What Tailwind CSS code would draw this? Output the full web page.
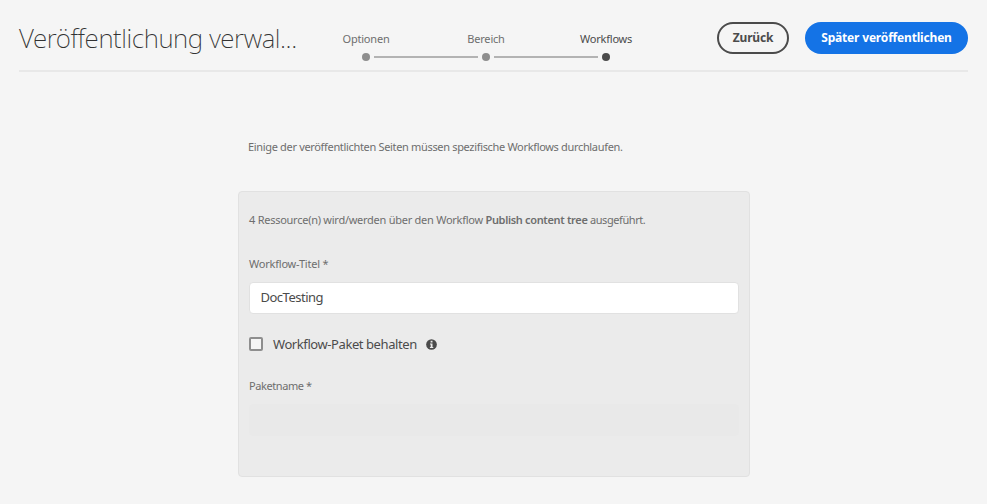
<!DOCTYPE html>
<html lang="de">
<head>
<meta charset="utf-8">
<title>Veröffentlichung verwalten</title>
<script src="https://cdn.jsdelivr.net/npm/@tailwindcss/browser@4"></script>
</head>
<body class="h-[504px] overflow-hidden bg-[#f5f5f5] px-[19px] font-['Noto_Sans','Open_Sans',sans-serif] text-[11px] tracking-[-0.33px] text-[#6e6e6e]">
<header class="flex h-[72px] border-b-2 border-[#e8e8e8]">
  <h1 class="w-[323px] pt-[18px] text-[26px] leading-[40px] font-extralight tracking-[-0.4px] whitespace-nowrap text-[#323232]"><span>Veröffentlichung verwal...</span></h1>
  <ol class="flex w-[288px] justify-between pt-8 leading-[14px] tracking-[-0.2px]">
    <li class="relative flex w-12 flex-col items-center gap-[7px]"><span>Optionen</span><i class="size-2 rounded-full bg-[#8e8e8e]"></i><b class="absolute top-[24px] left-8 h-0.5 w-[104px] bg-[#b3b3b3]"></b></li>
    <li class="relative flex w-12 flex-col items-center gap-[7px]"><span>Bereich</span><i class="size-2 rounded-full bg-[#8e8e8e]"></i><b class="absolute top-[24px] left-8 h-0.5 w-[104px] bg-[#b3b3b3]"></b></li>
    <li class="flex w-12 flex-col items-center gap-[7px] text-[#4b4b4b]"><span>Workflows</span><i class="size-2 rounded-full bg-[#4b4b4b]"></i></li>
  </ol>
  <div class="ml-auto flex gap-4 pt-[22px] text-[12px] font-bold tracking-[-0.18px]">
    <button class="h-8 w-[72px] rounded-full border-2 border-[#4b4b4b] text-[#4b4b4b]"><span>Zurück</span></button>
    <button class="h-8 w-[163px] rounded-full bg-[#1473e6] text-white"><span>Später veröffentlichen</span></button>
  </div>
</header>
<main class="ml-[219px] w-[512px] pt-[67px]">
  <p class="ml-[10px] h-[52px] leading-4 whitespace-nowrap"><span>Einige der veröffentlichten Seiten müssen spezifische Workflows durchlaufen.</span></p>
  <section class="h-[286px] rounded border border-[#e1e1e1] bg-[#ebebeb] px-[10px] pt-5">
    <p class="leading-4 tracking-[-0.26px] whitespace-nowrap"><span>4 Ressource(n) wird/werden über den Workflow <strong class="font-semibold tracking-[-0.33px]">Publish content tree</strong><span class="tracking-[-0.42px]"> ausgeführt.</span></span></p>
    <label class="mt-7 block leading-4 tracking-[-0.22px]"><span>Workflow-Titel *</span></label>
    <div class="mt-[10px] flex h-8 items-center rounded border border-[#e1e1e1] bg-white px-[10.5px] text-[13px] tracking-[-0.5px] text-[#4b4b4b]"><span>DocTesting</span></div>
    <div class="mt-5 flex h-5 items-center text-[13px] tracking-[-0.42px] text-[#4b4b4b]">
      <i class="size-[14px] rounded-[2px] border-2 border-[#8e8e8e] bg-[#f5f5f5]"></i>
      <span class="ml-[10px] w-[152.5px] pt-px whitespace-nowrap">Workflow-Paket behalten</span>
      <svg class="size-[11px]" viewBox="0 0 11 11"><circle cx="5.5" cy="5.5" r="5.35" fill="#4b4b4b"/><path d="M4.6 1.8h1.9v1.6H4.6zM4 4.4h2.5v3.5h.8v1H3.9v-1h.8V5.4H4z" fill="#ebebeb"/></svg>
    </div>
    <label class="mt-6 block leading-4 tracking-[-0.42px]"><span>Paketname *</span></label>
    <div class="mt-[10px] h-8 rounded bg-[#e9e9e9]"></div>
  </section>
</main>
</body>
</html>
